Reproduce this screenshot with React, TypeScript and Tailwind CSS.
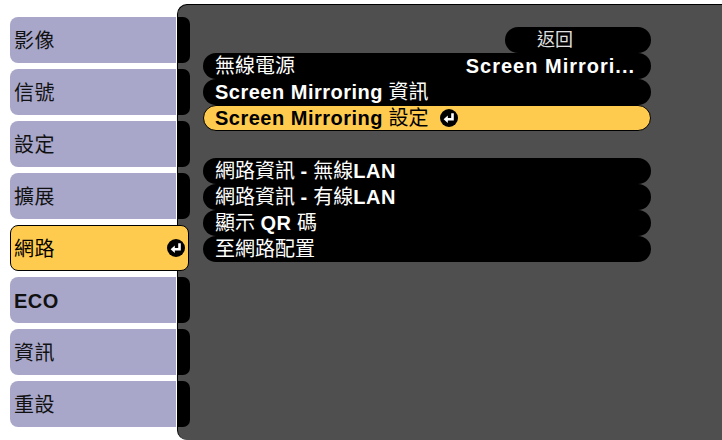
import React from "react";

const tabs = ["影像", "信號", "設定", "擴展", "網路", "ECO", "資訊", "重設"];
const selectedTab = "網路";

const font = {
  fontFamily: '"Liberation Sans", "Noto Sans CJK TC", sans-serif',
};

function EnterIcon() {
  return (
    <svg width="18" height="18" viewBox="0 0 18 18" className="shrink-0">
      <circle cx="9" cy="9" r="9" fill="#000" />
      <path d="M12.5 4.2V10.2H7" stroke="#fff" strokeWidth="2.6" fill="none" />
      <polygon points="3.6,10.2 7.8,6.4 7.8,14" fill="#fff" />
    </svg>
  );
}

type RowProps = {
  label: React.ReactNode;
  value?: string;
  selected?: boolean;
};

function MenuRow({ label, value, selected }: RowProps) {
  if (selected) {
    return (
      <div className="flex h-[26px] items-center gap-[11px] rounded-full border border-black bg-[#ffcb4f] pl-[11px] text-[20px] text-black">
        <span className="leading-none">{label}</span>
        <EnterIcon />
      </div>
    );
  }
  return (
    <div className="flex h-[26px] items-center justify-between rounded-full bg-black pl-[12px] pr-[16px] text-[20px] text-white">
      <span className="leading-none">{label}</span>
      {value && <span className="font-bold leading-none tracking-[1px]">{value}</span>}
    </div>
  );
}

function Latin({ children }: { children: React.ReactNode }) {
  return <span className="font-bold tracking-[0.5px]">{children}</span>;
}

export default function App() {
  return (
    <div className="flex h-[440px] w-[722px] overflow-hidden bg-white" style={font}>
      <div className="flex w-[177px] shrink-0 flex-col gap-[6px] pl-[10px] pr-[1px] pt-[17px]">
        {tabs.map((t) =>
          t === selectedTab ? (
            <div
              key={t}
              className="relative z-10 -mr-[13px] flex h-[46px] items-center justify-between rounded-[8px] border border-black bg-[#ffcb4f] pl-[3px] pr-[3px] text-[20px] text-black"
            >
              <span className="pt-[2px] tracking-[0.5px]">{t}</span>
              <EnterIcon />
            </div>
          ) : (
            <div
              key={t}
              className="flex h-[46px] items-center rounded-l-[8px] bg-[#a8a7c9] pl-[4px] text-[20px] text-[#111]"
            >
              <span className={t === "ECO" ? "pt-[2px] font-bold tracking-[0.5px]" : "pt-[2px] tracking-[0.5px]"}>
                {t}
              </span>
            </div>
          )
        )}
      </div>

      <div className="mt-[4px] flex flex-1 rounded-l-[10px] border-l border-t border-black bg-[#4f4f4f]">
        <div className="flex w-[12px] shrink-0 flex-col gap-[6px] pt-[12px]">
          {tabs.map((t) => (
            <div
              key={t}
              className={t === selectedTab ? "h-[46px]" : "h-[46px] rounded-r-[7px] bg-black"}
            />
          ))}
        </div>

        <div className="flex flex-col pl-[13px] pt-[22px]">
          <div className="flex w-[448px] flex-col">
            <div className="flex h-[26px] w-[146px] items-center self-end rounded-full bg-black pl-[32px] text-[18px] text-[#e0e0e0]">
              返回
            </div>
            <MenuRow label="無線電源" value="Screen Mirrori..." />
            <MenuRow
              label={
                <>
                  <Latin>Screen Mirroring</Latin> 資訊
                </>
              }
            />
            <MenuRow
              selected
              label={
                <>
                  <Latin>Screen Mirroring</Latin> 設定
                </>
              }
            />
          </div>

          <div className="mt-[27px] flex w-[448px] flex-col">
            <MenuRow
              label={
                <>
                  網路資訊 <Latin>-</Latin> 無線<Latin>LAN</Latin>
                </>
              }
            />
            <MenuRow
              label={
                <>
                  網路資訊 <Latin>-</Latin> 有線<Latin>LAN</Latin>
                </>
              }
            />
            <MenuRow
              label={
                <>
                  顯示 <Latin>QR</Latin> 碼
                </>
              }
            />
            <MenuRow label="至網路配置" />
          </div>
        </div>
      </div>
    </div>
  );
}
